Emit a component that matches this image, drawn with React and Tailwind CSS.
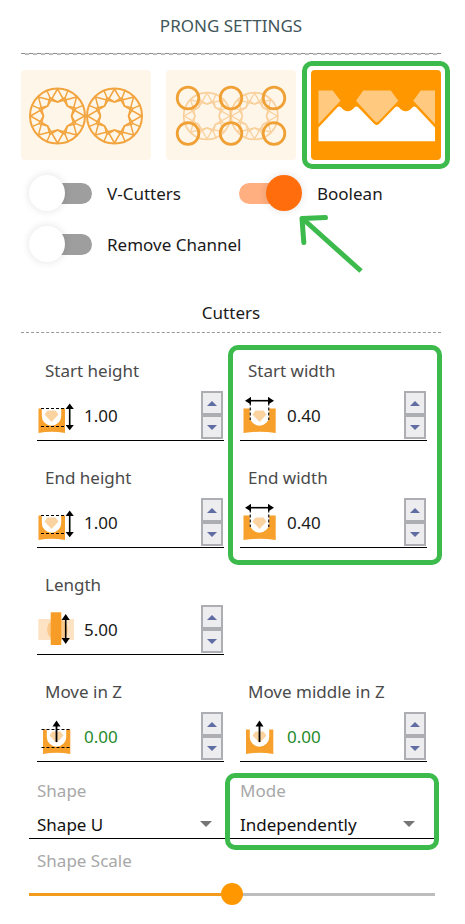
import React, { useId, useState } from 'react'

// Facet lines of a round brilliant, drawn around 0,0
const gemPoint = (radius, step) => {
  const angle = (step * Math.PI) / 8
  return `${(radius * Math.sin(angle)).toFixed(2)},${(-radius * Math.cos(angle)).toFixed(2)}`
}

const Gem = ({ x, y, scale = 1, opacity = 1 }) => (
  <g
    transform={`translate(${x} ${y}) scale(${scale})`}
    opacity={opacity}
    fill="none"
    stroke="#f2a43e"
    strokeWidth="1.5"
    strokeLinejoin="round"
  >
    <circle r="27.5" strokeWidth="2" />
    {[0, 2, 4, 6, 8, 10, 12, 14].map((step) => (
      <g key={step}>
        <polyline points={`${gemPoint(14, step - 2)} ${gemPoint(27, step)} ${gemPoint(14, step + 2)}`} />
        <polyline points={`${gemPoint(20, step - 1)} ${gemPoint(14, step)} ${gemPoint(20, step + 1)} ${gemPoint(27, step + 1)}`} />
      </g>
    ))}
  </g>
)

const GemsPicture = () => (
  <svg viewBox="0 0 130 90" className="block w-full" aria-hidden="true">
    <Gem x={36.5} y={46} />
    <Gem x={93.5} y={46} />
  </svg>
)

const ProngsPicture = () => (
  <svg viewBox="0 0 130 90" className="block w-full" aria-hidden="true">
    <Gem x={41} y={46} scale={0.85} opacity={0.45} />
    <Gem x={88.5} y={46} scale={0.85} opacity={0.45} />
    {[22, 65, 108].map((cx) => (
      <g key={cx} fill="none" stroke="#f0a136" strokeWidth="2.8">
        <circle cx={cx} cy="28" r="10.8" />
        <circle cx={cx} cy="63.5" r="10.8" />
      </g>
    ))}
  </svg>
)

const CuttersPicture = () => (
  <svg viewBox="0 0 130 90" className="block w-full" aria-hidden="true">
    <path
      fill="#fff"
      d="M7.5 71.3V57.5L26.5 37.3Q28 35.6 30 37.3C34 42.6 39.5 42.6 43.6 37.3Q45.6 35.6 47.2 37.3L63.4 54Q65.7 56.2 68 54L84.2 37.3Q85.8 35.6 87.8 37.3C92 42.6 97.5 42.6 101.5 37.3Q103.4 35.6 105 37.3L124 57.5V71.3Z"
    />
    <g fill="#ffca80">
      <path d="M7.5 20.6H21.7L29.5 30.7L7.5 54Z" />
      <path d="M52.3 20.6H79.7L87.3 30.7L67.5 51.6Q65.7 53.2 64 51.6L45 30.7Z" />
      <path d="M109.7 20.6H124V54L102.3 30.7Z" />
    </g>
  </svg>
)

const GemSeat = ({ left, right, cx, half }) => (
  <>
    <path
      fill="#f7a02b"
      d={`M${left} 15.5H${cx - half}V23A${half} ${half} 0 0 0 ${cx + half} 23V15.5H${right}V40Q${cx} 37.5 ${left} 40Z`}
    />
    <path fill="#fbd3a0" d={`M${cx - 4} 17.5H${cx + 4}L${cx + 7} 21.5L${cx} 29L${cx - 7} 21.5Z`} />
  </>
)

const HeightIcon = () => (
  <svg viewBox="0 0 40 42" className="mt-0.5 h-[42px] w-10 shrink-0" aria-hidden="true">
    <GemSeat left={1.5} right={28} cx={14.5} half={9.7} />
    <path d="M4 15.5H29M4 33.5H29" stroke="#000" strokeWidth="1.2" strokeDasharray="3 2" />
    <path d="M32.7 15V33" stroke="#000" strokeWidth="1.6" />
    <path d="M32.7 10.5L36.8 16H28.6ZM32.7 37.3L36.8 32H28.6Z" />
  </svg>
)

const WidthIcon = () => (
  <svg viewBox="0 0 40 42" className="mt-0.5 h-[42px] w-10 shrink-0" aria-hidden="true">
    <GemSeat left={3.5} right={35.7} cx={19.5} half={9.7} />
    <path d="M10.3 4.5V27M28.7 4.5V27" stroke="#333" strokeWidth="1.4" strokeDasharray="3 2" />
    <path d="M9 7.7H30" stroke="#000" strokeWidth="1.6" />
    <path d="M5 7.7L11 4V11.4ZM34 7.7L28 4V11.4Z" />
  </svg>
)

const LengthIcon = () => (
  <svg viewBox="0 0 40 42" className="mt-0.5 h-[42px] w-10 shrink-0" aria-hidden="true">
    <path fill="#fde3c4" d="M1.3 12H37V33H1.3Z" />
    <circle fill="#fbc98c" cx="20.5" cy="22.5" r="10.5" />
    <path fill="#f79d27" d="M13.7 5.3H24.3V38H13.7Z" />
    <path d="M28.7 11V33" stroke="#000" strokeWidth="1.6" />
    <path d="M28.7 7L32.8 13H24.6ZM28.7 37L32.8 31H24.6Z" />
  </svg>
)

const MoveIcon = ({ dashed }) => (
  <svg viewBox="0 0 40 42" className="mt-0.5 h-[42px] w-10 shrink-0" aria-hidden="true">
    <GemSeat left={6} right={33.3} cx={19.5} half={9.7} />
    {dashed && <path d="M4.5 15.5H34.5M4.5 33.5H34.5" stroke="#000" strokeWidth="1.2" strokeDasharray="3 2" />}
    <path d="M19.5 11V28" stroke="#000" strokeWidth="1.8" />
    <path d="M19.5 6.5L23.5 12.5H15.5Z" />
  </svg>
)

const MoveDashedIcon = () => <MoveIcon dashed />

const Spinner = ({ label, onStep }) => {
  const button =
    'flex h-6 w-[22px] items-center justify-center border-2 border-[#adaeb3] bg-[#ededf0]'
  return (
    <div className="mr-px flex shrink-0 flex-col">
      <button type="button" aria-label={`Increase ${label}`} className={button} onClick={() => onStep(1)}>
        <svg viewBox="0 0 10 5" className="h-[5px] w-[10px] fill-[#5f6da3]">
          <path d="M5 0L10 5H0Z" />
        </svg>
      </button>
      <button type="button" aria-label={`Decrease ${label}`} className={button} onClick={() => onStep(-1)}>
        <svg viewBox="0 0 10 5" className="h-[5px] w-[10px] fill-[#5f6da3]">
          <path d="M5 5L10 0H0Z" />
        </svg>
      </button>
    </div>
  )
}

const NumberField = ({ label, icon: Icon, initial, step = 0.1, green }) => {
  const id = useId()
  const [value, setValue] = useState(initial)
  return (
    <div className="flex flex-col gap-2">
      <label htmlFor={id} className="pl-2 text-[#4a4a4a]">
        {label}
      </label>
      <div className="flex h-[50px] border-b border-black">
        <Icon />
        <input
          id={id}
          type="text"
          value={value}
          onChange={(e) => setValue(e.target.value)}
          className={`w-full min-w-0 flex-1 pl-[7px] outline-none ${green ? 'text-[#1f8a2b]' : 'text-[#1a1a1a]'}`}
        />
        <Spinner
          label={label}
          onStep={(direction) => setValue((Number(value) + direction * step).toFixed(2))}
        />
      </div>
    </div>
  )
}

const Toggle = ({ label, initial = false }) => {
  const [checked, setChecked] = useState(initial)
  return (
    <label className="flex h-[51px] items-center gap-[15px] pl-2 whitespace-nowrap text-[#1a1a1a]">
      <input
        type="checkbox"
        checked={checked}
        onChange={(e) => setChecked(e.target.checked)}
        className="relative h-[21px] w-[63px] shrink-0 appearance-none rounded-full bg-[#9e9e9e] bg-clip-content pl-1 before:absolute before:-top-2 before:left-0 before:size-9 before:rounded-full before:bg-white before:shadow-[0_0_8px_rgba(0,0,0,0.12)] checked:bg-[#ffaf80] checked:pr-1 checked:pl-0 checked:before:left-[27px] checked:before:bg-[#ff6d0d]"
      />
      {label}
    </label>
  )
}

const SelectField = ({ label, options }) => {
  const id = useId()
  return (
    <div className="flex flex-col gap-1">
      <label htmlFor={id} className="pl-2 text-[#a8a8a8]">
        {label}
      </label>
      <div className="grid items-center border-b border-black">
        <select id={id} className="col-start-1 row-start-1 h-[31px] appearance-none pt-1 pl-2 text-[#111] outline-none">
          {options.map((option) => (
            <option key={option}>{option}</option>
          ))}
        </select>
        <svg
          viewBox="0 0 12 6"
          className="pointer-events-none col-start-1 row-start-1 mt-0.5 mr-5 h-1.5 w-3 justify-self-end fill-[#757575]"
        >
          <path d="M0 0H12L6 6Z" />
        </svg>
      </div>
    </div>
  )
}

const ScaleSlider = () => {
  const [scale, setScale] = useState(50)
  return (
    <div className="flex flex-col gap-2.5">
      <label htmlFor="shape-scale" className="pl-2 text-[#a8a8a8]">
        Shape Scale
      </label>
      <input
        id="shape-scale"
        type="range"
        min="0"
        max="100"
        value={scale}
        onChange={(e) => setScale(Number(e.target.value))}
        style={{ '--fill': `${scale}%` }}
        className="h-[22px] w-full appearance-none bg-[linear-gradient(to_right,#f29b1d_var(--fill),#bdbdbd_var(--fill))] bg-[length:100%_3px] bg-center bg-no-repeat [&::-webkit-slider-thumb]:size-[22px] [&::-webkit-slider-thumb]:appearance-none [&::-webkit-slider-thumb]:rounded-full [&::-webkit-slider-thumb]:bg-[#ff9800]"
      />
    </div>
  )
}

const App = () => {
  return (
    <main className="bg-white pr-6 pb-4 pl-[21px] font-['Noto_Sans','Open_Sans',sans-serif] text-[17px] leading-6">
      <h1 className="pt-[14px] pb-[15px] text-center text-[#41565a]">PRONG SETTINGS</h1>
      <div className="h-px bg-[repeating-linear-gradient(to_right,#8c8c8c_0_4px,#c8c8c8_4px_8px)]" />
      <div className="h-px bg-[repeating-linear-gradient(to_right,#ffffff_0_4px,#b4b4b4_4px_8px)]" />

      {/* Setting pages */}
      <div className="mt-[15px] grid grid-cols-3 gap-[15px]">
        <button type="button" aria-label="Gems" className="rounded-sm bg-[#fff6ea]">
          <GemsPicture />
        </button>
        <button type="button" aria-label="Prongs" className="rounded-sm bg-[#fff6ea]">
          <ProngsPicture />
        </button>
        <div className="relative">
          <button type="button" aria-label="Cutters" className="block w-full rounded-sm bg-[#ff9800]">
            <CuttersPicture />
          </button>
          <div className="pointer-events-none absolute -inset-[9px] rounded-[10px] border-5 border-[#3cba4c]" />
        </div>
      </div>

      {/* Switches */}
      <div className="relative mt-2 grid grid-cols-2">
        <Toggle label="V-Cutters" />
        <Toggle label="Boolean" initial />
        <Toggle label="Remove Channel" />
        <svg
          viewBox="0 0 64 60"
          className="pointer-events-none absolute top-[46px] left-[278px] h-[60px] w-16 fill-none stroke-[#3cba4c]"
          strokeWidth="5"
          aria-hidden="true"
        >
          <path d="M62 57L4 5" />
          <path d="M26.5 3.5L3 4.5L4.8 28.5" strokeLinecap="round" strokeLinejoin="round" />
        </svg>
      </div>

      <h2 className="mt-[31px] pb-[7px] text-center text-[#1a1a1a]">Cutters</h2>
      <div className="border-t border-dashed border-[#999]" />

      <div className="mt-[26px] grid grid-cols-2 gap-x-4 pr-[14px] pl-4">
        <div className="flex flex-col gap-[25px]">
          <NumberField label="Start height" icon={HeightIcon} initial="1.00" />
          <NumberField label="End height" icon={HeightIcon} initial="1.00" />
          <NumberField label="Length" icon={LengthIcon} initial="5.00" />
          <NumberField label="Move in Z" icon={MoveDashedIcon} initial="0.00" green />
        </div>
        <div className="flex flex-col justify-between">
          <div className="relative flex flex-col gap-[25px]">
            <NumberField label="Start width" icon={WidthIcon} initial="0.40" />
            <NumberField label="End width" icon={WidthIcon} initial="0.40" />
            <div className="pointer-events-none absolute -top-[14px] -right-[15px] -bottom-[17px] -left-3 rounded-[10px] border-5 border-[#3cba4c]" />
          </div>
          <NumberField label="Move middle in Z" icon={MoveIcon} initial="0.00" green />
        </div>
      </div>

      <div className="mt-[17px] flex flex-col gap-2.5 pr-1.5 pl-2">
        <div className="grid grid-cols-2">
          <SelectField label="Shape" options={['Shape U', 'Shape V']} />
          <div className="relative">
            <SelectField label="Mode" options={['Independently', 'Together']} />
            <div className="pointer-events-none absolute -top-1.5 -right-1 -bottom-[11px] -left-[7px] rounded-[10px] border-5 border-[#3cba4c]" />
          </div>
        </div>
        <ScaleSlider />
      </div>
    </main>
  )
}

export default App
